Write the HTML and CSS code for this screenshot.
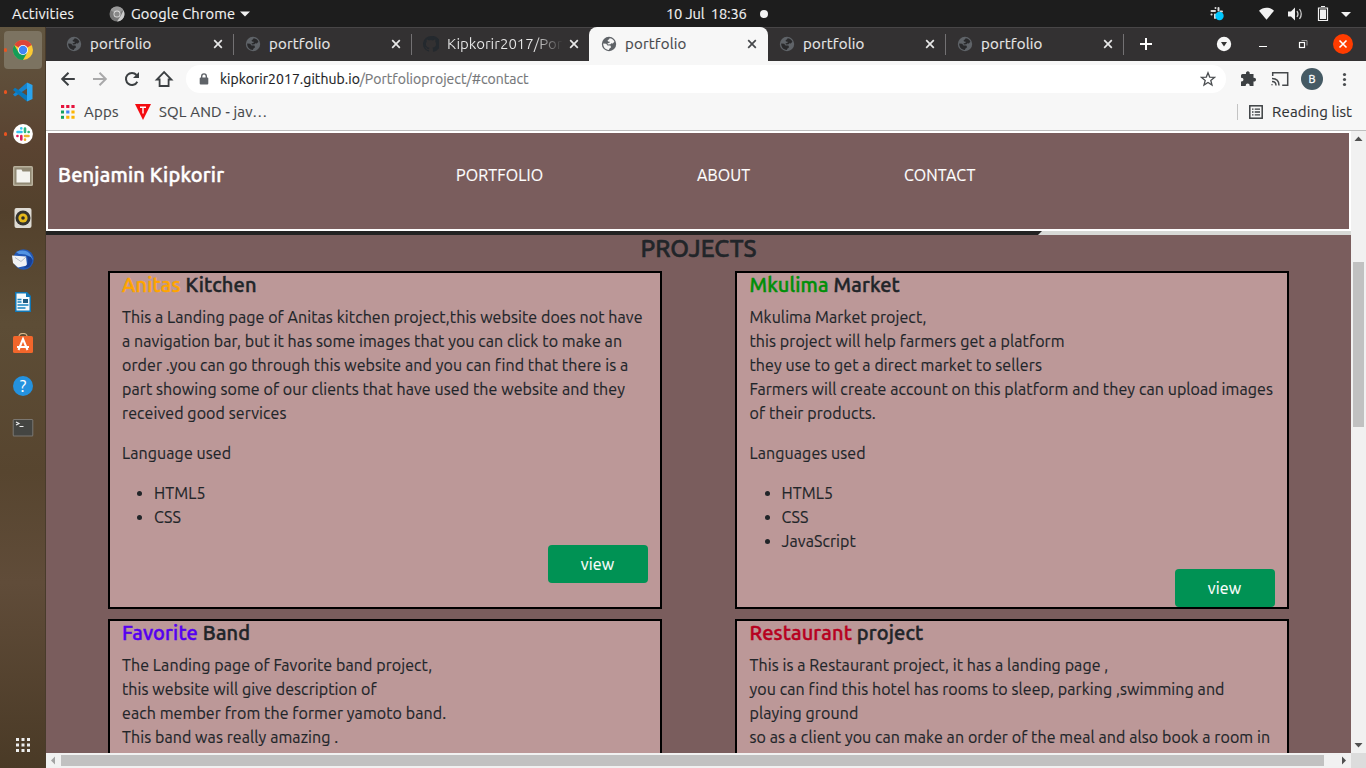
FILE: index.html
```
<!DOCTYPE html>
<html lang="en">
<head>
<meta charset="utf-8">
<title>portfolio</title>
<link rel="stylesheet" href="styles.css">
</head>
<body>
<svg class="defs" aria-hidden="true">
  <symbol id="globe" viewBox="0 0 16 16"><circle cx="8" cy="8" r="7.2" fill="#5f6368"/><path class="land" d="M8.600 2.300c2.100.2 4 1.500 4.800 3.400l-1.600 1.900-1.500-.3-.8 1-2.600.1-.5-1 2.200-.7.2-1-1.800-.2-.4-1.500 1.400-.5zM2.200 7.600l3 .2 1.300 1.600 2.900.2.700 1.700-1.800 1.500-.4 1.300C4.200 13.800 2 10.900 2.200 7.600z"/></symbol>
  <symbol id="x" viewBox="0 0 10 10"><path d="M1.200 1.200l7.600 7.600M8.800 1.200L1.200 8.800" fill="none" stroke="currentColor" stroke-width="1.700"/></symbol>
</svg>
<div class="desktop">
  <header class="topbar">
    <span class="activities">Activities</span>
    <svg class="app-icon" viewBox="0 0 16 16"><circle cx="8" cy="8" r="7.500" fill="#777"/><path d="M8 8L1.500 4.300A7.500 7.500 0 0 1 14.500 4.300z" fill="#999"/><path d="M8 15.500l4-6 2.500-5.200A7.500 7.500 0 0 1 8 15.500z" fill="#ccc"/><circle cx="8" cy="8" r="3.500" fill="#ddd"/><circle cx="8" cy="8" r="2.600" fill="#888"/></svg>
    <span class="app-name">Google Chrome</span>
    <svg class="caret" viewBox="0 0 10 6"><path d="M0 .5h10L5 5.500z" fill="#f2f2f2"/></svg>
    <span class="clock">10 Jul&nbsp; 18:36</span>
    <span class="notice"></span>
    <svg class="tray" viewBox="0 0 150 20">
      <g stroke="#ddd" stroke-width="2" stroke-linecap="round"><path d="M6.500 4v.1M9.500 4v2.500M2.500 7h3.500M11.500 7.500h1.500M2.500 10.500h.1M6 10.500v3.500"/></g><circle cx="10.500" cy="12" r="4.200" fill="#00c8ff"/>
      <path d="M50 6.800c4-4 11-4 15 0L57.500 15.800z" fill="#f2f2f2"/>
      <path d="M79 7.500h3l4-4v13l-4-4h-3z" fill="#f2f2f2"/><path d="M88 7q2 3 0 6M90.500 5q3.500 5 0 10" fill="none" stroke="#ccc" stroke-width="1.300"/>
      <path d="M109.500 4h9v12.500h-9zM112 2.500h4" fill="none" stroke="#f2f2f2" stroke-width="1.200"/><path d="M111 5.500h6V15h-6z" fill="#f2f2f2"/>
      <path d="M132 8h10l-5 5z" fill="#f2f2f2"/>
    </svg>
  </header>
  <div class="workspace">
    <aside class="dock">
      <div class="launcher active running"><svg viewBox="0 0 22 22"><circle cx="11" cy="11" r="10" fill="#fbc934"/><path d="M11 11L2.300 6A10 10 0 0 1 19.700 6z" fill="#dc4437"/><path d="M2.300 6A10 10 0 0 0 11 21l4.300-7.500L11 11 6.700 13.500z" fill="#159c58"/><circle cx="11" cy="11" r="5" fill="#fff"/><circle cx="11" cy="11" r="4.200" fill="#4285f4"/></svg></div>
      <div class="launcher running"><svg viewBox="0 0 22 22"><path d="M1 13.500L15 1.500v6L3 15.500z" fill="#1684cf"/><path d="M3 6.800L15 14.500v6L1 9z" fill="#0878bd"/><path d="M15 1.500l5.500 2.500v14L15 20.500z" fill="#29a4ef"/></svg></div>
      <div class="launcher running"><svg viewBox="0 0 22 22"><circle cx="11" cy="11" r="9.900" fill="#fff"/><g stroke-width="2.600" stroke-linecap="round"><path d="M9.300 5.300v.1M5.500 9h4" stroke="#36c5f0"/><path d="M13 5.500V9M16.600 9h.1" stroke="#2eb67d"/><path d="M13 16.600v.1M13 13h3.500" stroke="#ecb22e"/><path d="M9.300 13v3.500M5.400 13h.1" stroke="#e01e5a"/></g></svg></div>
      <div class="launcher"><svg viewBox="0 0 22 22"><rect x="1" y="1" width="20" height="20" rx="1.500" fill="#b8b09c"/><rect x="2.500" y="2.500" width="17" height="17" fill="#918974"/><path d="M4.500 4.500h5l1 2H18V17.500H4.500z" fill="#f4f3ef"/></svg></div>
      <div class="launcher"><svg viewBox="0 0 22 22"><rect x="2.500" y="1" width="17" height="20" rx="2" fill="#dedbd4"/><circle cx="11" cy="11" r="7.500" fill="#34332f"/><circle cx="11" cy="11" r="4.600" fill="#e5b91c"/><circle cx="11" cy="11" r="1.800" fill="#2d2a27"/></svg></div>
      <div class="launcher"><svg viewBox="0 0 22 22"><circle cx="11.500" cy="10.500" r="10.300" fill="#2358b5"/><path d="M4 3q13-5 17 8-5-7-14-6z" fill="#5394e3"/><path d="M0 6.500L14 7.500l1 9L6 18.500 1 14z" fill="#f1f2f4"/><path d="M3 8.500l6 4 5-4.500" fill="none" stroke="#b4bac6"/><path d="M15 7q3 7-3 12l5-1q5-5 2-10z" fill="#173f95"/></svg></div>
      <div class="launcher"><svg viewBox="0 0 22 22"><path d="M3 1h12l4 4v16H3z" fill="#1177b5"/><path d="M4.500 2.500H14V6h3.500v13.500h-13z" fill="#f6fafc"/><path d="M5.500 8.500h4M5.500 11h4M5.500 14h11M5.500 17h8" stroke="#1782bf" stroke-width="1.300"/><path d="M11 8h5v4h-5z" fill="#205b81"/></svg></div>
      <div class="launcher"><svg viewBox="0 0 22 22"><path d="M7 3.500q0-3 4-3t4 3" fill="none" stroke="#d6b789" stroke-width="1.200"/><rect x="1" y="3" width="20" height="17" rx="1.500" fill="#f2662b"/><path d="M6.500 17L11 6l4.500 11M5 14h12" fill="none" stroke="#fff" stroke-width="2"/></svg></div>
      <div class="launcher"><svg viewBox="0 0 22 22"><circle cx="11" cy="11" r="10" fill="#2492df"/><text x="11" y="17" text-anchor="middle" class="help">?</text></svg></div>
      <div class="launcher"><svg viewBox="0 0 22 22"><rect x=".7" y="2" width="20.600" height="17.500" rx="1.500" fill="#7b7771"/><rect x="1.700" y="3" width="18.600" height="15.500" fill="#444542"/><path d="M4 5l3 1.500L4 8M7.500 9.500h4" fill="none" stroke="#eee" stroke-width="1.100"/></svg></div>
      <svg class="all-apps" viewBox="0 0 14 14"><path d="M1.500 0v14M7 0v14M12.500 0v14" stroke="#eee" stroke-width="3" stroke-dasharray="3 2.500"/></svg>
    </aside>
    <div class="browser">
      <div class="tabs">
        <div class="tab first"><svg class="fav"><use href="#globe"/></svg><span class="tab-title">portfolio</span><svg class="close"><use href="#x"/></svg></div>
        <div class="tab"><svg class="fav"><use href="#globe"/></svg><span class="tab-title">portfolio</span><svg class="close"><use href="#x"/></svg></div>
        <div class="tab last-before"><svg class="fav" viewBox="0 0 16 16"><path d="M8 0a8 8 0 0 0-2.530 15.590c.4.070.55-.17.55-.38v-1.490c-2.010.37-2.530-.49-2.690-.94-.5-.9-.8-1.100-1.200-1.400.9-.3 1.500.4 1.800.9.700 1.100 1.600.9 2.100.6.100-.5.300-.9.500-1.100-1.780-.2-3.640-.89-3.640-3.950 0-.87.310-1.590.820-2.150-.08-.2-.36-1.020.08-2.120 0 0 .67-.21 2.200.82a7.500 7.500 0 0 1 4 0c1.530-1.040 2.200-.82 2.200-.82.440 1.100.16 1.920.08 2.120.510.560.82 1.270.82 2.150 0 3.070-1.870 3.750-3.650 3.950.290.250.540.730.540 1.480v2.190c0 .210.150.460.550.380A8 8 0 0 0 8 0z" fill="#24292e"/></svg><span class="tab-title fade">Kipkorir2017/Por</span><svg class="close"><use href="#x"/></svg></div>
        <div class="tab selected"><svg class="fav"><use href="#globe"/></svg><span class="tab-title">portfolio</span><svg class="close"><use href="#x"/></svg></div>
        <div class="tab"><svg class="fav"><use href="#globe"/></svg><span class="tab-title">portfolio</span><svg class="close"><use href="#x"/></svg></div>
        <div class="tab"><svg class="fav"><use href="#globe"/></svg><span class="tab-title">portfolio</span><svg class="close"><use href="#x"/></svg></div>
        <svg class="new-tab" viewBox="0 0 12 12"><path d="M6 0v12M0 6h12" stroke="#fff" stroke-width="2"/></svg>
        <svg class="window-controls" viewBox="0 0 142 34"><circle cx="10" cy="17" r="7.200" fill="#f7f7f7"/><path d="M7 15h6l-3 4.500z" fill="#333"/><path d="M45 19.500h8" stroke="#fff"/><path d="M87.500 13.500h5.500v5" fill="none" stroke="#999"/><rect x="85.500" y="15.500" width="5" height="5" fill="#333132" stroke="#fff" stroke-width="1.200"/><circle cx="129" cy="17" r="10" fill="#ff3c00"/><path d="M125.500 13.500l7 7M132.500 13.500l-7 7" stroke="#fff" stroke-width="1.600"/></svg>
      </div>
      <div class="toolbar">
        <svg class="nav-icons" viewBox="0 0 118 20" fill="none" stroke="#3c4043" stroke-width="2">
          <path d="M14.800 10H2.500M8.500 3.700L2.200 10l6.300 6.300"/>
          <path d="M33 10h12.500M39.500 3.700l6.300 6.300-6.300 6.300" stroke="#a9a9aa"/>
          <path d="M77.300 12.700A6 6 0 1 1 76.500 6"/><path d="M79 3v6h-6z" fill="#3c4043" stroke="none"/>
          <path d="M96.800 10.500h2.800V17h9v-6.500h2.800L104.100 3z" stroke-width="1.800"/>
        </svg>
        <div class="omnibox">
          <svg class="lock" viewBox="0 0 10 12"><path d="M2.700 5V3.200a2.300 2.300 0 0 1 4.600 0V5" fill="none" stroke="#5f6368" stroke-width="1.400"/><rect x=".7" y="4.500" width="8.600" height="7" rx="1" fill="#5f6368"/></svg>
          <span class="url"><b>kipkorir2017.github.io</b>/Portfolioproject/#contact</span>
          <svg class="star" viewBox="0 0 16 16"><path d="M8 1.800l1.700 4.300 4.700.3-3.600 3 1.200 4.600L8 11.500 4 14l1.200-4.600-3.600-3 4.700-.3z" fill="none" stroke="#4b4e51" stroke-width="1.300"/></svg>
        </div>
        <svg class="tools" viewBox="0 0 116 24">
          <path d="M2.500 7H6c-.8-3.600 4.500-3.600 3.700 0h3.800v3.700c3.400-.4 3.400 4.200 0 3.800V19H9.700c.2-3.300-4.200-3.300-4 0H1v-4.500c3.300.3 3.300-4 0-3.700V8.500q0-1.500 1.500-1.500z" fill="#3c4043"/>
          <path d="M32.700 9V5.700h15v12.600h-5.500" fill="none" stroke="#45484b" stroke-width="1.500"/><path d="M32 17.300v1M32 14.500q4 0 4 4M32 11.500q7 0 7 7" fill="none" stroke="#45484b" stroke-width="1.500"/>
          <circle cx="72" cy="12" r="11" fill="#455a64"/><text x="72" y="16" text-anchor="middle" class="avatar">B</text>
          <g fill="#4b4e51"><circle cx="104.500" cy="7.500" r="1.600"/><circle cx="104.500" cy="12.500" r="1.600"/><circle cx="104.500" cy="17.500" r="1.600"/></g>
        </svg>
      </div>
      <div class="bookmarks">
        <svg class="apps-grid" viewBox="0 0 14 14"><path d="M0 1.500h14" stroke="#e5133c" stroke-width="3" stroke-dasharray="3.200 2"/><path d="M0 7h3" stroke="#16a05d" stroke-width="3"/><path d="M5.200 7h3.200" stroke="#4285f4" stroke-width="3"/><path d="M10.400 7h3.200" stroke="#fbb504" stroke-width="3"/><path d="M0 12.300h3" stroke="#16a05d" stroke-width="3"/><path d="M5.200 12.300h8.400" stroke="#fbb504" stroke-width="3" stroke-dasharray="3.200 2"/></svg>
        <span class="apps-label">Apps</span>
        <svg class="t-logo" viewBox="0 0 16 16"><path d="M0 0h16L8 16z" fill="#f40b10"/><path d="M5 3.200h6M8 3.200v6.300" stroke="#fff" stroke-width="1.400"/></svg>
        <span class="sql">SQL AND - jav…</span>
        <span class="reading"><svg viewBox="0 0 14 14"><rect x=".8" y=".8" width="12.400" height="12.400" fill="none" stroke="#3c4043" stroke-width="1.500"/><path d="M3 4.200h1.500M3 7h1.500M3 9.800h1.500M5.700 4.200H11M5.700 7H11M5.700 9.800H11" stroke="#3c4043" stroke-width="1.300"/></svg><span class="reading-label">Reading list</span></span>
      </div>
      <div class="viewport">
        <main class="page">
          <nav class="site-nav"><span class="brand">Benjamin Kipkorir</span><span class="link-portfolio">PORTFOLIO</span><span class="link-about">ABOUT</span><span class="link-contact">CONTACT</span></nav>
          <svg class="photo-edge" viewBox="0 0 1305 4"><path d="M0 0h1305v4H0z" fill="#d7d9d6"/><path d="M0 0h996l-4 4H0z" fill="#222"/></svg>
          <h2>PROJECTS</h2>
          <div class="projects">
            <article class="card">
              <h3><span class="orange">Anitas</span> Kitchen</h3>
              <p>This a Landing page of Anitas kitchen project,this website does not have<br>a navigation bar, but it has some images that you can click to make an<br>order .you can go through this website and you can find that there is a<br>part showing some of our clients that have used the website and they<br>received good services</p>
              <p>Language used</p>
              <ul><li>HTML5</li><li>CSS</li></ul>
              <span class="view">view</span>
            </article>
            <article class="card">
              <h3><span class="green">Mkulima</span> Market</h3>
              <p>Mkulima Market project,<br>this project will help farmers get a platform<br>they use to get a direct market to sellers<br>Farmers will create account on this platform and they can upload images<br>of their products.</p>
              <p>Languages used</p>
              <ul><li>HTML5</li><li>CSS</li><li>JavaScript</li></ul>
              <span class="view">view</span>
            </article>
            <article class="card">
              <h3><span class="violet">Favorite</span> Band</h3>
              <p>The Landing page of Favorite band project,<br>this website will give description of<br>each member from the former yamoto band.<br>This band was really amazing .</p>
            </article>
            <article class="card">
              <h3><span class="red">Restaurant</span> project</h3>
              <p>This is a Restaurant project, it has a landing page ,<br>you can find this hotel has rooms to sleep, parking ,swimming and<br>playing ground<br>so as a client you can make an order of the meal and also book a room in</p>
            </article>
          </div>
        </main>
        <div class="vscroll"><svg viewBox="0 0 15 17"><path d="M3.500 10h8l-4-4.500z" fill="#505050"/></svg><i></i><svg viewBox="0 0 15 17"><path d="M3.500 7h8l-4 4.500z" fill="#505050"/></svg></div>
        <div class="hscroll"><svg viewBox="0 0 15 15"><path d="M9 3.500v8L5 7.500z" fill="#a3a3a3"/></svg><i></i><svg viewBox="0 0 27 15"><path d="M18 3.500v8l4-4z" fill="#505050"/></svg></div>
        <div class="corner"></div>
      </div>
    </div>
  </div>
</div>
</body>
</html>
```
FILE: styles.css
```
* { box-sizing: border-box; }
body { margin: 0; width: 1366px; height: 768px; overflow: hidden; font-family: Ubuntu, "Noto Sans", sans-serif; color: #212529; }
svg { display: block; flex: none; }
.defs { position: absolute; width: 0; height: 0; }
.desktop { height: 768px; display: flex; flex-direction: column; }
.topbar { height: 27px; flex: none; background: #1d1d1d; display: flex; align-items: center; color: #f2f2f2; font-size: 14.667px; white-space: nowrap; padding-left: 12px; -webkit-text-stroke: .15px; }
.activities { width: 97px; letter-spacing: .2px; }
.app-icon { width: 16px; height: 16px; }
.app-name { width: 109px; margin-left: 6px; letter-spacing: .1px; }
.caret { width: 10px; height: 6px; }
.clock { margin-left: 416px; width: 94px; letter-spacing: -.15px; }
.notice { width: 8px; height: 8px; border-radius: 50%; background: #f2f2f2; }
.tray { width: 150px; height: 20px; margin-left: 441px; }
.workspace { flex: 1; display: flex; min-height: 0; }
.dock { width: 46px; flex: none; background: linear-gradient(#625640, #5a4331 16%, #53412c 25%, #5d4d36 40%, #57452f 60%, #604c39 75%, #4a3a26); border-right: 1px solid #493b2b; padding: 4px 0 0 4px; display: flex; flex-direction: column; gap: 4px; }
.launcher { width: 38px; height: 38px; border-radius: 4px; display: grid; place-items: center; position: relative; }
.launcher.active { background: #7c7361; }
.launcher.running::before { content: ""; position: absolute; left: 0; top: 17px; width: 3px; height: 4px; border-radius: 2px; background: #e95420; }
.launcher svg { width: 22px; height: 22px; }
.help { font-size: 17px; fill: #fff; }
.all-apps { width: 14px; height: 14px; margin: auto 0 16px 12px; }
.browser { flex: 1; min-width: 0; display: flex; flex-direction: column; background: #f7f7f7; }
.tabs { height: 34px; flex: none; background: #333132; border-top: 1px solid #484647; display: flex; align-items: center; color: #e8e8e8; }
.tab { --land: #29292b; width: 178px; height: 33px; display: flex; align-items: center; padding: 0 11px 1px 11px; position: relative; flex: none; }
.tab.first { width: 188px; padding-left: 20px; }
.tab.last-before { width: 177px; padding-right: 10px; border-bottom-right-radius: 8px; }
.tab::after { content: ""; position: absolute; right: 0; top: 6px; height: 21px; width: 1px; background: #737173; }
.tab.last-before::after, .tab.selected::after { display: none; }
.tab.selected { --land: #f7f7f7; width: 179px; height: 34px; margin-top: -1px; padding: 0 11px 0 12px; background: #f7f7f7; color: #46484b; border-radius: 8px 8px 0 0; }
.fav { width: 16px; height: 16px; }
.land { fill: var(--land); }
.tab-title { margin: -1px 0 0 8px; width: 120px; font-size: 15px; letter-spacing: .18px; white-space: nowrap; overflow: hidden; -webkit-text-stroke: .15px; }
.tab-title.fade { background: linear-gradient(90deg, #e8e8e8 74%, #333132 98%); -webkit-background-clip: text; background-clip: text; color: transparent; width: 118px; letter-spacing: 0; -webkit-text-stroke: 0; }
.close { width: 10px; height: 10px; margin-left: auto; }
.new-tab { width: 12px; height: 12px; margin: -1px 0 0 16px; }
.window-controls { width: 142px; height: 34px; margin: -1px 10px 0 auto; }
.toolbar { height: 36px; flex: none; display: flex; align-items: center; padding-left: 14px; }
.nav-icons { width: 118px; height: 20px; }
.omnibox { height: 28px; width: 1040px; margin-left: 8px; border-radius: 14px; background: #fff; display: flex; align-items: center; padding: 0 10px 0 13px; }
.lock { width: 10px; height: 12px; }
.url { margin-left: 11px; font-size: 14px; letter-spacing: .05px; color: #75777a; white-space: nowrap; -webkit-text-stroke: .15px; }
.url b { font-weight: 400; color: #202124; }
.star { width: 16px; height: 16px; margin-left: auto; }
.tools { width: 116px; height: 24px; margin-left: 14px; }
.avatar { font-size: 11px; fill: #fff; stroke: #fff; stroke-width: .3px; }
.bookmarks { height: 34px; flex: none; border-bottom: 1px solid #bebebe; display: flex; align-items: center; padding: 0 14px 4px 15px; font-size: 15px; color: #46484b; white-space: nowrap; -webkit-text-stroke: .15px; }
.apps-grid { width: 14px; height: 14px; }
.apps-label { margin-left: 9px; width: 42px; letter-spacing: .2px; }
.t-logo { width: 16px; height: 16px; margin-left: 9px; }
.sql { margin-left: 8px; letter-spacing: .17px; }
.reading { margin-left: auto; border-left: 1px solid #c4c4c4; height: 16px; display: flex; align-items: center; padding-left: 11px; }
.reading svg { width: 14px; height: 14px; }
.reading-label { margin-left: 9px; width: 80px; letter-spacing: .15px; color: #303336; }
.viewport { flex: 1; display: grid; grid-template-columns: 1305px 15px; grid-template-rows: 622px 15px; }
.page { background: #7a5d5d; overflow: hidden; }
.site-nav { height: 100px; border: 2px solid #fff; display: flex; align-items: center; padding: 0 0 12px 10px; color: #fff; font-size: 16px; letter-spacing: .1px; white-space: nowrap; -webkit-text-stroke: .15px; }
.brand { font-size: 20px; font-weight: 500; width: 398px; letter-spacing: .2px; margin-top: -1px; -webkit-text-stroke: .45px; }
.link-portfolio { width: 241px; }
.link-about { width: 207px; }
.photo-edge { width: 1305px; height: 4px; }
h2, h3, p, ul { margin: 0; }
h2 { font-size: 24px; font-weight: 500; line-height: 27px; height: 36px; text-align: center; -webkit-text-stroke: .5px; }
.projects { display: grid; grid-template-columns: 554px 554px; grid-template-rows: 338px 338px; column-gap: 73px; row-gap: 10px; padding-left: 62px; }
.card { background: #bc9898; border: 2px solid #000; padding: 0 12px; display: flex; flex-direction: column; }
.card:nth-child(even) { padding-left: 12.500px; }
h3 { font-size: 20px; font-weight: 500; line-height: 24px; margin-bottom: 8px; letter-spacing: .15px; -webkit-text-stroke: .45px; }
p, ul { font-size: 16px; line-height: 24px; margin-bottom: 16px; letter-spacing: .085px; white-space: nowrap; -webkit-text-stroke: .15px; }
ul { padding-left: 32px; }
.orange { color: #ffa500; }
.green { color: #008f08; }
.violet { color: #5500f0; }
.red { color: #b70020; }
.view { align-self: flex-end; width: 100px; height: 38px; flex: none; border-radius: 4px; background: #009254; color: #fff; text-align: center; line-height: 38px; font-size: 16px; letter-spacing: .1px; padding-right: 1px; -webkit-text-stroke: .15px; }
.vscroll { background: #f1f1f1; display: flex; flex-direction: column; justify-content: space-between; align-items: center; position: relative; }
.vscroll svg { width: 15px; height: 17px; }
.vscroll i { position: absolute; top: 131px; left: 2px; width: 11px; height: 165px; background: #c1c1c1; }
.hscroll { background: #f1f1f1; display: flex; align-items: center; }
.hscroll svg { width: 15px; height: 15px; }
.hscroll svg:last-child { width: 27px; }
.hscroll i { flex: 1; height: 11px; background: #c1c1c1; }
.corner { background: #dcdcdc; }
```
